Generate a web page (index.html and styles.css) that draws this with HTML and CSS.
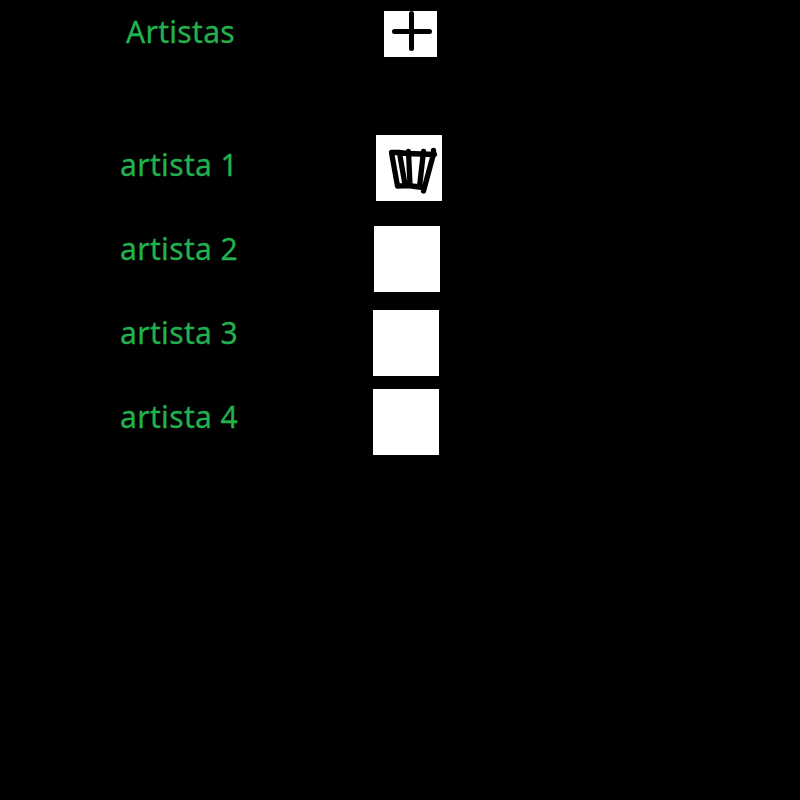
FILE: index.html
```html
<!DOCTYPE html>
<html lang="es">
<head>
<meta charset="utf-8">
<title>Artistas</title>
<link rel="stylesheet" href="styles.css">
</head>
<body>
<main class="page">
  <div class="labels">
    <h1 class="label title">Artistas</h1>
    <p class="label">artista 1</p>
    <p class="label">artista 2</p>
    <p class="label">artista 3</p>
    <p class="label">artista 4</p>
  </div>
  <div class="actions">
    <button class="tile add" aria-label="Agregar">
      <svg class="icon" viewBox="0 0 53 46"><path d="M27.5 2.5V37.5M10.5 20.5H45.5"/></svg>
    </button>
    <button class="tile first" aria-label="Eliminar">
      <svg class="icon" viewBox="0 0 66 66"><path d="M15.5 17.5L23 17.5L31 18.5L58.5 19.5M57.5 15.5V19L47.5 56M15.5 17.5L21.5 51L32 50.5L47 52.5M23.5 18L29 49.5M32.5 16.5L34 50M47.5 16.5L43.5 52"/></svg>
    </button>
    <button class="tile second" aria-label="Eliminar"></button>
    <button class="tile third" aria-label="Eliminar"></button>
    <button class="tile fourth" aria-label="Eliminar"></button>
  </div>
</main>
</body>
</html>
```
FILE: styles.css
```css
body {
  margin: 0;
  background: #000;
}

.page {
  display: grid;
  grid-template-columns: 253px 1fr;
  align-items: start;
  min-height: 789px;
  padding: 11px 0 0 120px;
}

.labels {
  display: flex;
  flex-direction: column;
  gap: 43px;
}

.label {
  margin: 0;
  color: #22b14c;
  font: 400 30px/41px "Noto Sans", sans-serif;
  letter-spacing: 0.35px;
  -webkit-text-stroke: 0.3px #22b14c;
}

.title {
  margin: 0 0 49px 6px;
  letter-spacing: 0.3px;
}

.actions {
  display: flex;
  flex-direction: column;
  align-items: flex-start;
}

.tile {
  width: 66px;
  height: 66px;
  padding: 0;
  border: 0;
  background: #fff;
}

.add {
  width: 53px;
  height: 46px;
  margin: 0 0 78px 11px;
}

.first {
  margin: 0 0 25px 3px;
}

.second {
  margin: 0 0 18px 1px;
}

.third {
  margin-bottom: 13px;
}

.icon {
  display: block;
  width: 100%;
  height: 100%;
  fill: none;
  stroke: #000;
  stroke-width: 5;
  stroke-linecap: round;
  stroke-linejoin: round;
}

.first .icon {
  stroke-width: 5.3;
}
```
